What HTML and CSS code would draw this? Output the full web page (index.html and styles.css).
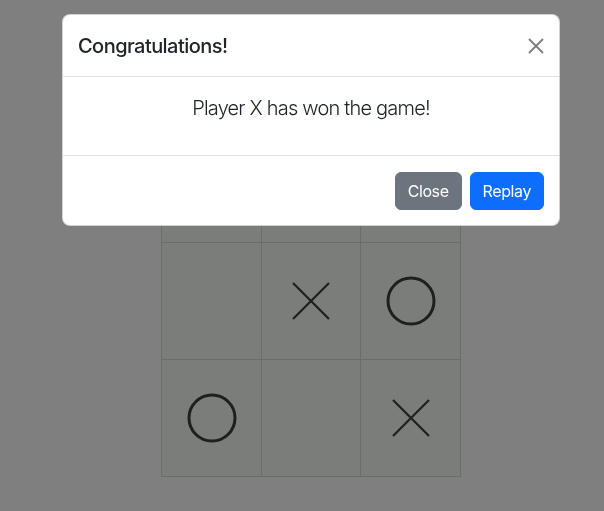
FILE: index.html
```html
<!DOCTYPE html>
<html lang="en">
<head>
<meta charset="utf-8">
<title>Tic Tac Toe</title>
<link rel="stylesheet" href="styles.css">
</head>
<body>
<main class="page">
  <div class="board">
    <div class="cell"></div>
    <div class="cell"></div>
    <div class="cell"></div>
    <div class="cell"></div>
    <div class="cell"><svg class="mark" viewBox="0 0 50 50"><path d="M7 7L43 43M43 7L7 43"/></svg></div>
    <div class="cell"><svg class="mark" viewBox="0 0 50 50"><circle cx="25" cy="25" r="23"/></svg></div>
    <div class="cell"><svg class="mark" viewBox="0 0 50 50"><circle cx="25" cy="25" r="23"/></svg></div>
    <div class="cell"></div>
    <div class="cell"><svg class="mark" viewBox="0 0 50 50"><path d="M7 7L43 43M43 7L7 43"/></svg></div>
  </div>
</main>
<div class="backdrop"></div>
<div class="modal">
  <div class="modal-content">
    <div class="modal-header">
      <h5 class="modal-title">Congratulations!</h5>
      <button class="btn-close" aria-label="Close"><svg viewBox="0 0 16 16"><path d="M1 1L15 15M15 1L1 15"/></svg></button>
    </div>
    <div class="modal-body">
      <p class="lead">Player X has won the game!</p>
    </div>
    <div class="modal-footer">
      <button class="btn btn-secondary">Close</button>
      <button class="btn btn-primary">Replay</button>
    </div>
  </div>
</div>
</body>
</html>
```
FILE: styles.css
```css
* { box-sizing: border-box; }
html, body { margin: 0; padding: 0; }
body {
  font-family: Inter, "Noto Sans", "Liberation Sans", sans-serif;
  color: #212529;
  background: #fff;
  width: 604px;
  height: 511px;
  overflow: hidden;
}
.page {
  padding-top: 125px;
}
.board {
  margin-left: 161px;
  width: fit-content;
  display: grid;
  grid-template-columns: 100px 99px 100px;
  grid-template-rows: 117px 117px 117px;
  border-right: 1px solid #d6dad6;
  border-bottom: 1px solid #d6dad6;
}
.cell {
  background: #f6faf6;
  border-left: 1px solid #d6dad6;
  border-top: 1px solid #d6dad6;
  display: flex;
  align-items: center;
  justify-content: center;
}
.mark {
  width: 50px;
  height: 50px;
  fill: none;
  stroke: #3e3e3e;
  stroke-width: 2.2;
}
.mark circle { stroke-width: 3; }
.backdrop {
  position: fixed;
  inset: 0;
  background: rgba(0, 0, 0, 0.5);
}
.modal {
  position: fixed;
  top: 14px;
  left: 62px;
  width: 498px;
}
.modal-content {
  background: #fff;
  border: 1px solid rgba(0, 0, 0, 0.175);
  border-radius: 8px;
  display: flex;
  flex-direction: column;
}
.modal-header {
  display: flex;
  align-items: center;
  justify-content: space-between;
  padding: 16px 15px 15px 15px;
  border-bottom: 1px solid #dee2e6;
}
.modal-title {
  margin: 0;
  font-size: 20px;
  font-weight: 500;
  line-height: 30px;
  letter-spacing: -0.55px;
}
.btn-close {
  width: 24px;
  height: 24px;
  padding: 4px;
  margin-right: -4px;
  border: 0;
  background: transparent;
  opacity: 0.5;
  display: flex;
}
.btn-close svg {
  width: 16px;
  height: 16px;
  fill: none;
  stroke: #000;
  stroke-width: 1.8;
}
.modal-body {
  padding: 16px;
  text-align: center;
}
.lead {
  margin: 0 0 16px;
  font-size: 20px;
  font-weight: 300;
  line-height: 30px;
  letter-spacing: -0.8px;
}
.modal-footer {
  display: flex;
  justify-content: flex-end;
  gap: 8px;
  padding: 16px 15px 15px;
  border-top: 1px solid #dee2e6;
}
.btn {
  font-family: inherit;
  font-size: 16px;
  line-height: 24px;
  padding: 6px 12px;
  border: 1px solid transparent;
  border-radius: 6px;
  color: #fff;
  letter-spacing: -0.4px;
}
.btn-secondary { background: #6c757d; border-color: #6c757d; }
.btn-primary { background: #0d6efd; border-color: #0d6efd; }
```
